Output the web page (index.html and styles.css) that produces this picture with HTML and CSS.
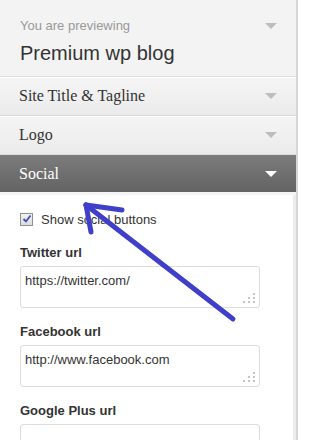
FILE: index.html
```html
<!DOCTYPE html>
<html lang="en">
<head>
  <meta charset="UTF-8" />
  <title>Customize - Premium wp blog</title>
  <link rel="stylesheet" href="styles.css">
</head>
<body>

<!-- Customizer sidebar -->
<aside class="customizer">
  <div class="preview-head">
    <div class="preview-label">
      <span>You are previewing</span>
      <span class="caret"></span>
    </div>
    <h1 class="preview-title">Premium wp blog</h1>
  </div>

  <div class="section">Site Title &amp; Tagline<span class="caret"></span></div>
  <div class="section">Logo<span class="caret"></span></div>
  <div class="section open">Social<span class="caret"></span></div>

  <div class="section-body">
    <label class="check">
      <span class="box">
        <svg width="10" height="10" viewBox="0 0 10 10"><path d="M1.5 5 L4 7.5 L8.5 1.5" fill="none" stroke="#3d4fb0" stroke-width="1.8"/></svg>
      </span>
      Show social buttons
    </label>

    <div class="field">
      <label>Twitter url</label>
      <div class="input-wrap">
        <textarea>https://twitter.com/</textarea>
        <svg class="grip" width="12" height="10" viewBox="0 0 12 10"><g fill="#c4c4c4"><rect x="10" y="0" width="2" height="2"/><rect x="5" y="4" width="2" height="2"/><rect x="10" y="4" width="2" height="2"/><rect x="0" y="8" width="2" height="2"/><rect x="5" y="8" width="2" height="2"/><rect x="10" y="8" width="2" height="2"/></g></svg>
      </div>
    </div>

    <div class="field">
      <label>Facebook url</label>
      <div class="input-wrap">
        <textarea>http://www.facebook.com</textarea>
        <svg class="grip" width="12" height="10" viewBox="0 0 12 10"><g fill="#c4c4c4"><rect x="10" y="0" width="2" height="2"/><rect x="5" y="4" width="2" height="2"/><rect x="10" y="4" width="2" height="2"/><rect x="0" y="8" width="2" height="2"/><rect x="5" y="8" width="2" height="2"/><rect x="10" y="8" width="2" height="2"/></g></svg>
      </div>
    </div>

    <div class="field">
      <label>Google Plus url</label>
      <div class="input-wrap">
        <textarea></textarea>
      </div>
    </div>
  </div>
</aside>

<!-- Hand-drawn annotation arrow -->
<svg class="annotation" width="310" height="440" viewBox="0 0 310 440">
  <g fill="none" stroke="#3f3fc9" stroke-width="5" stroke-linecap="round" stroke-linejoin="round">
    <path d="M233 319 L86 205"/>
    <path d="M86 205 L122 210"/>
    <path d="M86 205 L91 232"/>
  </g>
</svg>

</body>
</html>
```

FILE: styles.css
```css
body {
  margin: 0;
  background: #fff;
  font-family: Arial, "Liberation Sans", sans-serif;
  color: #333;
  overflow: hidden;
}
.customizer {
  width: 296px;
  height: 440px;
  border-right: 2px solid #d6d6d6;
  background: #fff;
  overflow: hidden;
}
.caret {
  width: 0;
  height: 0;
  border-left: 6px solid transparent;
  border-right: 6px solid transparent;
  border-top: 6px solid #bdbdbd;
}
.preview-head {
  height: 77px;
  background: #f3f3f3;
  border-bottom: 1px solid #dedede;
  padding: 17px 19px 0 20px;
  box-sizing: border-box;
}
.preview-label {
  display: flex;
  justify-content: space-between;
  align-items: center;
  font-size: 13px;
  line-height: 18px;
  color: #999;
}
.preview-title {
  margin: 6px 0 0;
  font-size: 20px;
  line-height: 24px;
  font-weight: normal;
  color: #333;
}
.section {
  display: flex;
  justify-content: space-between;
  align-items: center;
  height: 38px;
  padding: 0 19px;
  border-bottom: 1px solid #dcdcdc;
  background: linear-gradient(#f5f5f5, #ebebeb);
  font-family: "Liberation Serif", "DejaVu Serif", serif;
  font-size: 16px;
  color: #333;
  box-shadow: inset 0 1px #fff;
}
.section.open {
  height: 37px;
  border-bottom: none;
  background: linear-gradient(#7c7c7c, #636363);
  color: #fff;
  box-shadow: none;
}
.section.open .caret {
  border-top-color: #fff;
}
.section-body {
  border-top: 3px solid #f4f4f4;
  padding: 18px 19px 0 20px;
  height: 300px;
  box-shadow: inset -3px 0 #ececec;
}
.check {
  display: flex;
  align-items: center;
  gap: 8px;
  font-size: 13px;
  height: 12px;
  margin-bottom: 20px;
}
.box {
  width: 11px;
  height: 11px;
  border: 1px solid #8f8f8f;
  background: linear-gradient(#f2f2f2, #dcdcdc);
  display: flex;
  align-items: center;
  justify-content: center;
}
.field {
  margin-bottom: 16px;
}
.field label {
  display: block;
  font-size: 13px;
  font-weight: bold;
  line-height: 16px;
  margin-bottom: 5px;
}
.input-wrap {
  position: relative;
  width: 240px;
}
.input-wrap textarea {
  display: block;
  width: 240px;
  height: 42px;
  box-sizing: border-box;
  border: 1px solid #dcdcdc;
  border-radius: 3px;
  padding: 6px 4px;
  font-family: Arial, "Liberation Sans", sans-serif;
  font-size: 13px;
  line-height: 16px;
  color: #333;
  resize: none;
  outline: none;
}
.grip {
  position: absolute;
  right: 5px;
  bottom: 5px;
}
.annotation {
  position: absolute;
  top: 0;
  left: 0;
  pointer-events: none;
}
```
